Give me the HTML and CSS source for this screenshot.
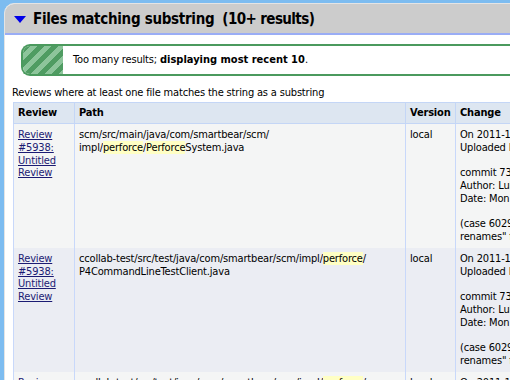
FILE: index.html
```html
<!DOCTYPE html>
<html lang="en">
<head>
    <meta charset="UTF-8">
    <title>Search Results - Code Collaborator</title>
    <link rel="stylesheet" href="styles.css">
</head>
<body>
    <div class="panel">
        <div class="panel-header">
            <span class="toggle"></span>
            <h2>Files matching substring<span class="count">(10+ results)</span></h2>
        </div>
        <div class="panel-body">
            <div class="notice">
                <div class="notice-stripes"></div>
                <div class="notice-text">Too many results; <b>displaying most recent 10</b>.</div>
            </div>

            <p class="intro">Reviews where at least one file matches the string as a substring</p>

            <table class="results">
                <colgroup>
                    <col class="col-review">
                    <col class="col-path">
                    <col class="col-version">
                    <col class="col-change">
                </colgroup>
                <thead>
                    <tr>
                        <th>Review</th>
                        <th>Path</th>
                        <th>Version</th>
                        <th>Change</th>
                    </tr>
                </thead>
                <tbody>
                    <tr class="odd">
                        <td><a href="#">Review #5938: Untitled Review</a></td>
                        <td>scm/src/main/java/com/smartbear/scm/<br>impl/<span class="hit">perforce</span>/<span class="hit">Perforce</span>System.java</td>
                        <td>local</td>
                        <td class="change">On 2011-11-14 16:02 UTC, Luke Hagan wrote:<br>Uploaded Files (first version)<br><br>commit 7395b1c0e2a4d8f61b9a3c5e7d2f0a8b6c4e1d93<br>Author: Luke Hagan &lt;lhagan@smartbear.com&gt;<br>Date: Mon Nov 14 10:58:21 2011 -0500<br><br>(case 6029) support for "detect moves and<br>renames" for Perforce changelists</td>
                    </tr>
                    <tr class="even">
                        <td><a href="#">Review #5938: Untitled Review</a></td>
                        <td>ccollab-test/src/test/java/com/smartbear/scm/impl/<span class="hit">perforce</span>/<br>P4CommandLineTestClient.java</td>
                        <td>local</td>
                        <td class="change">On 2011-11-14 16:02 UTC, Luke Hagan wrote:<br>Uploaded Files (first version)<br><br>commit 7395b1c0e2a4d8f61b9a3c5e7d2f0a8b6c4e1d93<br>Author: Luke Hagan &lt;lhagan@smartbear.com&gt;<br>Date: Mon Nov 14 10:58:21 2011 -0500<br><br>(case 6029) support for "detect moves and<br>renames" for Perforce changelists</td>
                    </tr>
                    <tr class="odd">
                        <td><a href="#">Review #5938: Untitled Review</a></td>
                        <td>ccollab-test/src/test/java/com/smartbear/scm/impl/<span class="hit">perforce</span>/<br>P4ChangelistTest.java</td>
                        <td>local</td>
                        <td class="change">On 2011-11-14 16:02 UTC, Luke Hagan wrote:<br>Uploaded Files (first version)</td>
                    </tr>
                </tbody>
            </table>
        </div>
    </div>
</body>
</html>
```

FILE: styles.css
```css
/* Search results page */
* {
    box-sizing: border-box;
}

html {
    overflow: hidden;
}

body {
    margin: 0;
    padding: 3px 0 0 4px;
    width: 1000px;
    background: #7dbcf0;
    font-family: 'DejaVu Sans Condensed', 'DejaVu Sans', sans-serif;
    font-size: 11px;
    letter-spacing: -0.17px;
    color: #000;
}

.panel {
    width: 900px;
    background: #fff;
    border: 1px solid #e4e4e4;
    border-top-left-radius: 10px;
    overflow: hidden;
}

.panel-header {
    display: flex;
    align-items: center;
    height: 31px;
    background: #cccccc;
    border-bottom: 2px solid #9aadf5;
    padding-left: 9px;
}

.toggle {
    width: 0;
    height: 0;
    border-left: 6px solid transparent;
    border-right: 6px solid transparent;
    border-top: 7px solid #0000e8;
    margin-right: 7px;
    margin-top: 2px;
}

.panel-header h2 {
    margin: 0;
    font-size: 15px;
    letter-spacing: -0.3px;
    font-weight: bold;
}

.count {
    margin-left: 8px;
    letter-spacing: -0.6px;
}

.panel-body {
    padding: 9px 0 0 7px;
}

.notice {
    display: flex;
    height: 32px;
    margin-left: 9px;
    border: 2px solid #4b9a5e;
    border-right: none;
    border-radius: 9px 0 0 9px;
    overflow: hidden;
}

.notice-stripes {
    width: 40px;
    background: repeating-linear-gradient(135deg, #4f9c62 0, #4f9c62 5px, #8dc59b 5px, #8dc59b 10px);
}

.notice-text {
    flex: 1;
    padding-left: 10px;
    line-height: 28px;
}

.notice-text b {
    letter-spacing: 0;
}

.intro {
    margin: 10px 0 3px 0;
}

.results {
    table-layout: fixed;
    width: 700px;
    margin-left: 1px;
    border-collapse: collapse;
    line-height: 12.75px;
}

.col-review { width: 61px; }
.col-path { width: 331px; }
.col-version { width: 50px; }
.col-change { width: 258px; }

.results th {
    background: #dde6f1;
    border: 1px solid #c4d6f6;
    text-align: left;
    font-weight: bold;
    height: 21px;
    padding: 0 4px;
}

.results td {
    border-left: 1px solid #c8d8fa;
    border-right: 1px solid #c8d8fa;
    vertical-align: top;
    padding: 5px 4px 4px 4px;
}

.results tr.odd td {
    background: #f4f5f5;
}

.results tr.even td {
    background: #ebedf3;
}

.results a {
    color: #1b1b73;
}

.change {
    white-space: nowrap;
    overflow: hidden;
}

.hit {
    background: #ffffc4;
}
```
